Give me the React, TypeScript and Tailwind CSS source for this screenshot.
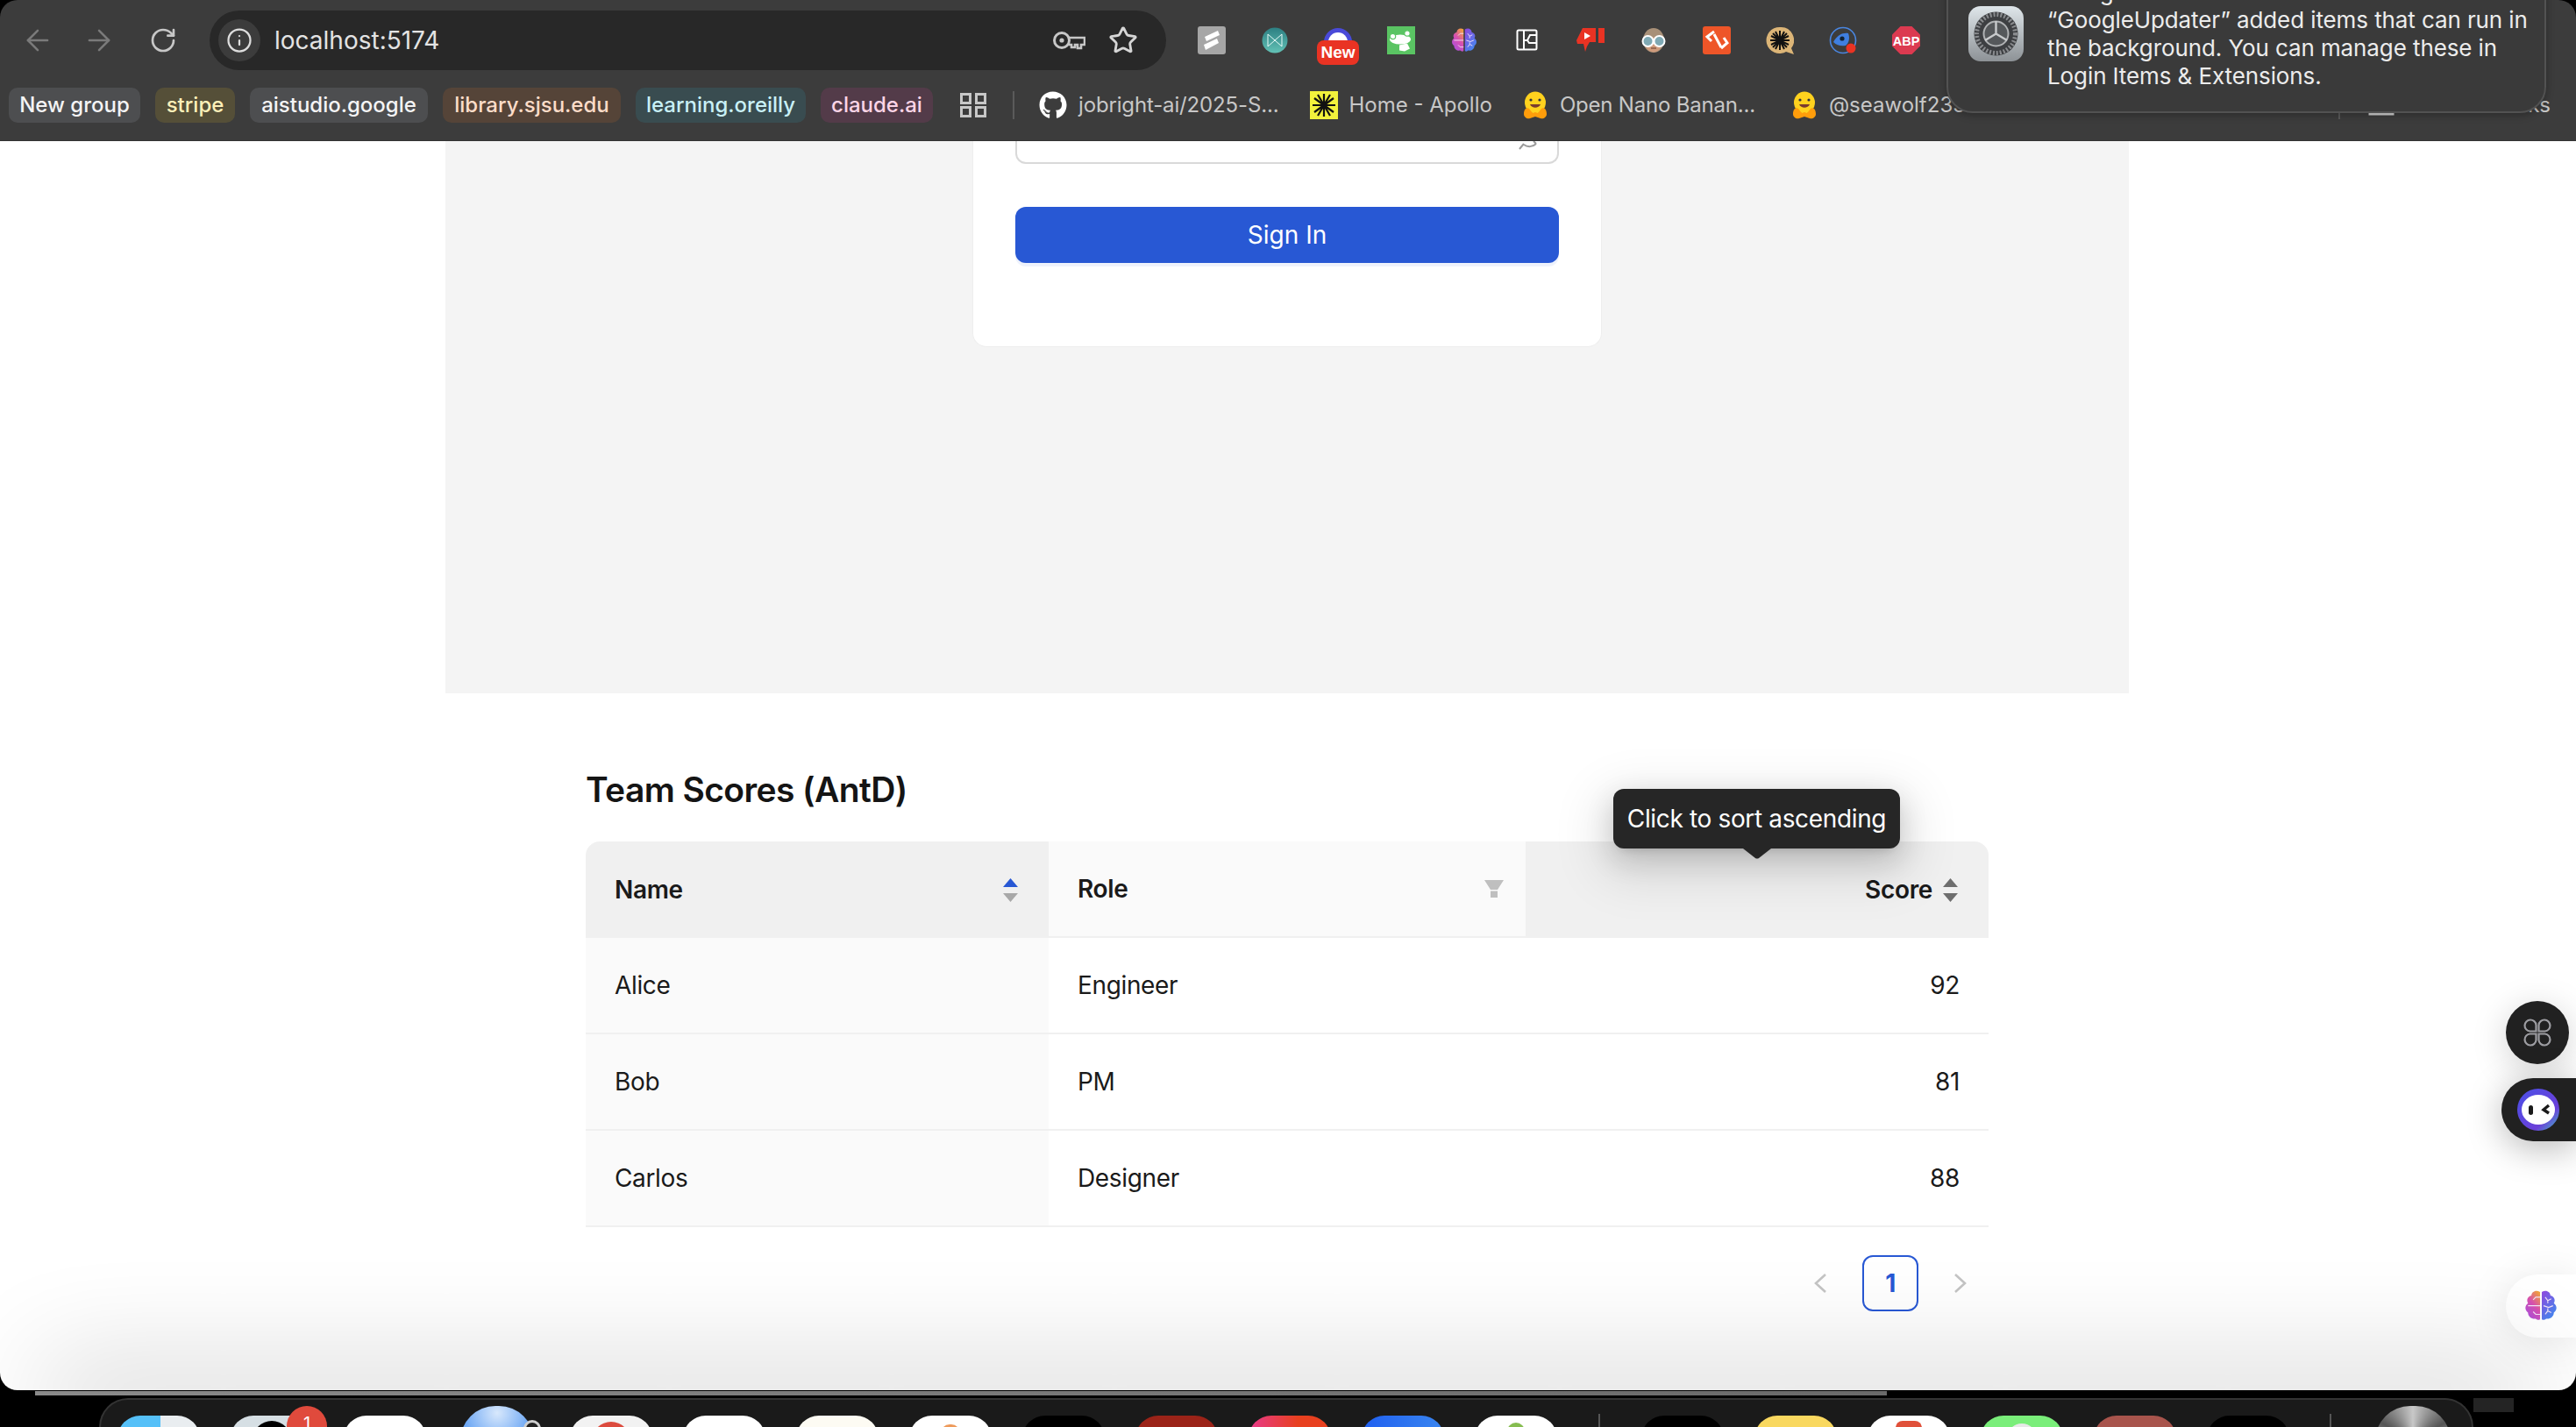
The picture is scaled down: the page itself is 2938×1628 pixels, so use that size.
import React from "react";
import { ArrowLeft, ArrowRight, RotateCw, Info, Star } from "lucide-react";
import { FaGithub } from "react-icons/fa";

const chips = [
  { t: "New group", c: "bg-[#4d4e50] text-[#f4f4f5]", w: "w-[150px]" },
  { t: "stripe", c: "bg-[#554f38] text-[#fdf0b8]", w: "w-[91px]" },
  { t: "aistudio.google", c: "bg-[#4d4e50] text-[#f4f4f5]", w: "w-[203px]" },
  { t: "library.sjsu.edu", c: "bg-[#554438] text-[#fcdcc8]", w: "w-[203px]" },
  { t: "learning.oreilly", c: "bg-[#394c50] text-[#c8f0f6]", w: "w-[194px]" },
  { t: "claude.ai", c: "bg-[#533b49] text-[#fcd4e6]", w: "w-[128px]" },
];

function Brain({ size = 30 }: { size?: number }) {
  return (
    <svg width={size} height={size * 0.93} viewBox="0 0 38 36" className="shrink-0">
      <defs>
        <linearGradient id="brainL" x1="0.8" y1="0" x2="0.2" y2="1">
          <stop offset="0" stopColor="#f0a040" />
          <stop offset="0.45" stopColor="#d850b0" />
          <stop offset="1" stopColor="#a850e0" />
        </linearGradient>
        <linearGradient id="brainR" x1="0.2" y1="0" x2="0.8" y2="1">
          <stop offset="0" stopColor="#8a4de0" />
          <stop offset="1" stopColor="#3f8cf0" />
        </linearGradient>
      </defs>
      <path d="M18 2c-5-3-10 0-10 4-5 1-6 6-4 9-4 3-4 8 0 11 0 5 5 8 9 7 2 2 5 2 5 0z" fill="url(#brainL)" />
      <path d="M20 2c5-3 10 0 10 4 5 1 6 6 4 9 4 3 4 8 0 11 0 5-5 8-9 7-2 2-5 2-5 0z" fill="url(#brainR)" />
      <path d="M18 18H4M18 8h-5l-3 3M18 28h-5l-3-3M24 8l3 4 4-2M27 12v3M24 28l3-4 4 2M27 24v-3M22 18l6 2 5-2" stroke="#f3e4f6" strokeWidth="1.2" fill="none" />
    </svg>
  );
}

function Hug() {
  return (
    <svg width="30" height="32" viewBox="0 0 30 32" className="shrink-0">
      <ellipse cx="15" cy="13" rx="12" ry="12.5" fill="#ffd21e" />
      <path d="M2 26c0-5 3-8 6-6l4 5 3-1 3 1 4-5c3-2 6 1 6 6 0 4-4 6-7 5l-6-2-6 2c-3 1-7-1-7-5z" fill="#ff9d0b" />
      <circle cx="10" cy="10" r="1.6" fill="#32343d" />
      <circle cx="20" cy="10" r="1.6" fill="#32343d" />
      <path d="M9 15c2 5 10 5 12 0z" fill="#7a3b2e" />
    </svg>
  );
}

function Sorter({ up, down }: { up: string; down: string }) {
  return (
    <svg width="17" height="27" viewBox="0 0 17 27" className="shrink-0">
      <polygon points="0,10 8.5,0 17,10" fill={up} />
      <polygon points="0,17 17,17 8.5,27" fill={down} />
    </svg>
  );
}

function Extensions() {
  return (
    <div className="ml-[36px] flex items-center gap-[40px] shrink-0">
      <svg width="32" height="32" viewBox="0 0 32 32"><rect width="32" height="32" rx="3" fill="#a6a6a6" /><path d="M8 12l15-7 2 5-15 7zM7 21l15-7 2 5-15 8z" fill="#fff" /></svg>
      <svg width="32" height="32" viewBox="0 0 32 32"><defs><linearGradient id="teal" x1="0" y1="0" x2="0" y2="1"><stop offset="0" stopColor="#2d7f82" /><stop offset="1" stopColor="#63c2b6" /></linearGradient></defs><circle cx="16" cy="16" r="14.5" fill="url(#teal)" /><path d="M8 9l8 7 8-7v14l-8-7-8 7z" fill="none" stroke="#e8fbf8" strokeWidth="1" /></svg>
      <div className="relative w-[32px] h-[32px]">
        <svg width="32" height="32" viewBox="0 0 32 32"><path d="M0 18a16 16 0 0 1 32 0z" fill="#4a4ad8" /><path d="M5 18a11 11 0 0 1 22 0z" fill="#fff" /></svg>
        <div className="absolute left-[-8px] top-[16px] w-[48px] h-[28px] rounded-[8px] bg-[#e93323] text-white font-bold text-[19px] leading-[28px] text-center font-['Liberation_Sans',sans-serif]">New</div>
      </div>
      <svg width="32" height="32" viewBox="0 0 32 32"><rect width="32" height="32" fill="#5ac463" /><ellipse cx="15" cy="15" rx="12" ry="5.5" fill="#fff" /><circle cx="6.5" cy="11.5" r="3.2" fill="#fff" stroke="#5ac463" strokeWidth="1.2" /><circle cx="23" cy="8" r="3.2" fill="#fff" stroke="#5ac463" strokeWidth="1.2" /><path d="M14 21.5l9-2 3 6-6 3-6-1z" fill="#fff" /></svg>
      <div className="w-[32px] flex justify-center"><Brain size={30} /></div>
      <svg width="32" height="32" viewBox="0 0 32 32"><rect x="4.5" y="4.5" width="22" height="22" rx="1.5" fill="none" stroke="#fff" strokeWidth="2" /><path d="M12 5v21M12 16h4l3-6h7M16 16l2 3h8" fill="none" stroke="#fff" strokeWidth="2" /></svg>
      <svg width="32" height="32" viewBox="0 0 32 32"><path d="M7 2h15v16h-7l-3 5-2 6-2-9H1l-1-4zM25 2h7v17h-7z" fill="#e93323" /><path d="M9 7l7 4-7 4z" fill="#fff" /></svg>
      <svg width="32" height="32" viewBox="0 0 32 32"><ellipse cx="16" cy="16" rx="12" ry="14" fill="#a89078" /><ellipse cx="16" cy="21" rx="9" ry="8.5" fill="#cf9b7c" /><circle cx="9.5" cy="17" r="6" fill="#7fa9b4" stroke="#fff" strokeWidth="2" /><circle cx="22.5" cy="17" r="6" fill="#7fa9b4" stroke="#fff" strokeWidth="2" /><path d="M13 25h6" stroke="#8a5a44" strokeWidth="1.5" /></svg>
      <svg width="32" height="32" viewBox="0 0 32 32"><rect width="32" height="32" rx="3" fill="#ee5528" /><path d="M13 6L5 12l5 5M13 9l8 15M24 13l4 6-7 6" fill="none" stroke="#fff" strokeWidth="3" /></svg>
      <svg width="32" height="32" viewBox="0 0 32 32"><path d="M16 1a15 15 0 1 0 7 28l9 3-3-7A15 15 0 0 0 16 1z" fill="#dcb577" /><path d="M16 5v22M5 16h22M8 8l16 16M24 8L8 24M11 6l10 20M21 6L11 26M6 11l20 10M26 11L6 21" stroke="#111" strokeWidth="2" /></svg>
      <svg width="32" height="32" viewBox="0 0 32 32"><circle cx="16" cy="16" r="14.5" fill="none" stroke="#4a86e0" strokeWidth="1.6" /><path d="M5 18c4-8 11-11 17-10 2 5 1 11-3 14-5 1-10 0-14-4z" fill="#3f7fe0" /><circle cx="15" cy="14" r="2.6" fill="#123" /><circle cx="25" cy="25" r="5.5" fill="#e93323" /></svg>
      <svg width="32" height="32" viewBox="0 0 32 32"><polygon points="9.5,0 22.5,0 32,9.5 32,22.5 22.5,32 9.5,32 0,22.5 0,9.5" fill="#dc3a50" /><text x="16" y="21.5" textAnchor="middle" fontSize="14.5" fontWeight="700" fontFamily="Liberation Sans" fill="#fff">ABP</text></svg>
    </div>
  );
}

function BrowserChrome() {
  return (
    <div className="h-[161px] shrink-0 bg-[#3c3c3c] border-b border-[#333333] flex flex-col text-[#c7c7c7] rounded-t-[20px]">
      <div className="flex items-center h-[68px] mt-[12px] shrink-0">
        <div className="w-[239px] shrink-0 flex items-center pl-[24px] gap-[32px]">
          <ArrowLeft size={38} strokeWidth={1.6} className="text-[#7a7a7a]" />
          <ArrowRight size={38} strokeWidth={1.6} className="text-[#7a7a7a]" />
          <RotateCw size={32} strokeWidth={2} className="ml-[6px] text-[#c7c7c7]" />
        </div>
        <div className="w-[1091px] h-[68px] rounded-full bg-[#282828] flex items-center pl-[10px] pr-[32px] shrink-0">
          <div className="w-[48px] h-[48px] rounded-full bg-[#3c3c3c] flex items-center justify-center"><Info size={30} strokeWidth={1.8} className="text-[#dedede]" /></div>
          <span className="ml-[16px] text-[28px] text-[#e3e3e3]">localhost:5174</span>
          <div className="ml-auto flex items-center gap-[26px]">
            <svg width="38" height="26" viewBox="0 0 38 26"><circle cx="11" cy="13" r="8.5" fill="none" stroke="#c7c7c7" strokeWidth="3" /><circle cx="11" cy="13" r="2.6" fill="#c7c7c7" /><path d="M19 10h18v8h-4v4h-4v-4h-3v3h-4v-3h-3" fill="none" stroke="#c7c7c7" strokeWidth="2.6" /></svg>
            <Star size={34} strokeWidth={2} className="text-[#d6d6d6]" />
          </div>
        </div>
        <Extensions />
      </div>
      <div className="flex items-center h-[40px] mt-[20px] pl-[10px] pr-[29px] text-[24px] whitespace-nowrap">
        <div className="flex gap-[17px] shrink-0">
          {chips.map((c) => (
            <div key={c.t} className={`h-[40px] rounded-[10px] flex items-center justify-center font-medium ${c.c} ${c.w}`}>{c.t}</div>
          ))}
        </div>
        <svg width="30" height="28" viewBox="0 0 30 28" className="ml-[31px] shrink-0"><g fill="none" stroke="#c7c7c7" strokeWidth="3"><rect x="1.5" y="1.5" width="10" height="10" /><rect x="18.5" y="1.5" width="10" height="10" /><rect x="1.5" y="16.5" width="10" height="10" /><rect x="18.5" y="16.5" width="10" height="10" /></g></svg>
        <div className="w-[2px] h-[32px] bg-[#5a5a5a] ml-[30px] shrink-0" />
        <FaGithub size={32} className="ml-[28px] text-white shrink-0" />
        <span className="ml-[13px] tracking-[-0.15px]">jobright-ai/2025-S...</span>
        <svg width="32" height="32" viewBox="0 0 32 32" className="ml-[36px] shrink-0"><rect width="32" height="32" fill="#f2f23c" /><path d="M16 3v26M5 8l22 16M27 8L5 24M3 16h26M9 4l14 24M23 4L9 28" stroke="#111" strokeWidth="2.2" /></svg>
        <span className="ml-[12px]">Home - Apollo</span>
        <div className="ml-[34px]"><Hug /></div>
        <span className="ml-[13px] tracking-[-0.2px]">Open Nano Banan...</span>
        <div className="ml-[41px]"><Hug /></div>
        <span className="ml-[13px]">@seawolf2339</span>
        <div className="ml-auto w-[2px] h-[32px] bg-[#5a5a5a] shrink-0" />
        <svg width="30" height="24" viewBox="0 0 30 24" className="ml-[32px] shrink-0"><path d="M2 2h10l3 3h13v17H2z" fill="none" stroke="#d4d4d4" strokeWidth="3" /></svg>
        <span className="ml-[16px]">All Bookmarks</span>
      </div>
    </div>
  );
}

function LoginPanel() {
  return (
    <div className="ml-[508px] w-[1920px] h-[630px] shrink-0 bg-[#f4f4f4] flex flex-col items-center">
      <div className="w-[718px] h-[235px] shrink-0 bg-white border-x border-b border-[#eeeeee] rounded-b-[16px] px-[48px] flex flex-col">
        <div className="h-[26px] shrink-0 border-x-2 border-b-2 border-[#d9d9d9] rounded-b-[12px] flex justify-end items-start pr-[20px] overflow-hidden">
          <svg width="26" height="10" viewBox="0 0 26 10"><path d="M3 9L8 3M8 4c4 3 10 3 14-1M19 0l3 3" fill="none" stroke="#9a9a9a" strokeWidth="2" /></svg>
        </div>
        <button className="mt-[49px] h-[64px] shrink-0 rounded-[12px] bg-[#2858d4] text-white text-[28px] shadow-[0_4px_0_rgba(40,88,212,0.08)]">Sign In</button>
      </div>
    </div>
  );
}

const rows = [
  ["Alice", "Engineer", "92"],
  ["Bob", "PM", "81"],
  ["Carlos", "Designer", "88"],
];

function Chevron({ d }: { d: string }) {
  return (
    <svg width="16" height="24" viewBox="0 0 16 24"><path d={d} fill="none" stroke="#c4c4c4" strokeWidth="2.6" /></svg>
  );
}

function ScoreTable() {
  return (
    <div className="ml-[668px] w-[1600px] shrink-0 text-[28px] tracking-[-0.35px] text-[#1a1a1a]">
      <h2 className="mt-[82px] h-[56px] leading-[56px] text-[39px] tracking-[-0.6px] font-semibold text-[#141414]">Team Scores (AntD)</h2>
      <div className="mt-[31px] rounded-t-[16px]">
        <div className="grid grid-cols-[528px_544px_528px] h-[110px] font-semibold">
          <div className="bg-[#f0f0f0] rounded-tl-[16px] flex items-center justify-between pl-[33px] pr-[35px]">
            <span>Name</span>
            <Sorter up="#2858d4" down="#a8a8a8" />
          </div>
          <div className="bg-[#fafafa] border-b-2 border-[#f0f0f0] flex items-center justify-between pl-[33px] pr-[25px]">
            <span>Role</span>
            <svg width="22" height="20" viewBox="0 0 22 20"><path d="M0 0h22l-7 11H7zM7 12.5h8V20H7z" fill="#bfbfbf" /></svg>
          </div>
          <div className="relative bg-[#f0f0f0] rounded-tr-[16px] flex items-center justify-end gap-[12px] pr-[35px]">
            <span>Score</span>
            <Sorter up="#6e6e6e" down="#6e6e6e" />
            <div className="absolute left-[100px] top-[-60px] w-[327px] h-[68px] rounded-[12px] bg-[#262626] text-white font-normal flex items-center justify-center shadow-[0_12px_32px_0_rgba(0,0,0,0.16),0_6px_12px_-8px_rgba(0,0,0,0.24),0_18px_56px_16px_rgba(0,0,0,0.1)]">
              Click to sort ascending
              <svg width="32" height="12" viewBox="0 0 32 12" className="absolute left-[148px] top-full"><path d="M0 0h32L18 11q-2 1-4 0z" fill="#262626" /></svg>
            </div>
          </div>
        </div>
        {rows.map((r) => (
          <div key={r[0]} className="grid grid-cols-[528px_544px_528px] h-[110px] border-b-2 border-[#f0f0f0]">
            <div className="bg-[#fafafa] flex items-center pl-[33px]">{r[0]}</div>
            <div className="flex items-center pl-[33px]">{r[1]}</div>
            <div className="flex items-center justify-end pr-[33px]">{r[2]}</div>
          </div>
        ))}
      </div>
      <div className="mt-[32px] flex justify-end gap-[16px] items-center">
        <div className="w-[64px] h-[64px] flex items-center justify-center"><Chevron d="M14 2L3 12l11 10" /></div>
        <div className="w-[64px] h-[64px] rounded-[12px] border-2 border-[#2858d4] text-[#2858d4] font-bold flex items-center justify-center">1</div>
        <div className="w-[64px] h-[64px] flex items-center justify-center"><Chevron d="M2 2l11 10L2 22" /></div>
      </div>
    </div>
  );
}

function FloatingWidgets() {
  return (
    <>
      <div className="absolute left-[2858px] top-[981px] w-[72px] h-[72px] rounded-full bg-[#212121] flex items-center justify-center shadow-[0_8px_40px_rgba(0,0,0,0.18)]">
        <svg width="32" height="32" viewBox="0 0 32 32" fill="none" stroke="#9d9da2" strokeWidth="2.2">
          <path d="M14.5 14.5H7.5a6.5 6.5 0 1 1 7-7z" />
          <path d="M17.5 14.5h7a6.5 6.5 0 1 0-7-7z" />
          <path d="M14.5 17.5H7.5a6.5 6.5 0 1 0 7 7z" />
          <path d="M17.5 17.5h7a6.5 6.5 0 1 1-7 7z" />
        </svg>
      </div>
      <div className="absolute left-[2853px] right-0 top-[1069px] h-[72px] rounded-l-full bg-[#212121] flex items-center pl-[18px] shadow-[0_8px_40px_rgba(0,0,0,0.28)]">
        <svg width="48" height="48" viewBox="0 0 48 48">
          <defs><linearGradient id="ring" x1="0" y1="0" x2="1" y2="1"><stop offset="0" stopColor="#4a50e8" /><stop offset="0.7" stopColor="#6a40d8" /><stop offset="1" stopColor="#40c0c8" /></linearGradient></defs>
          <circle cx="24" cy="24" r="24" fill="url(#ring)" />
          <ellipse cx="24" cy="24" rx="19" ry="17" fill="#fff" />
          <rect x="13" y="19" width="5" height="11" rx="2.5" fill="#1a1a1a" />
          <path d="M36 19l-6 5 6 4" fill="none" stroke="#1a1a1a" strokeWidth="3.4" />
        </svg>
      </div>
      <div className="absolute left-[2858px] right-0 top-[1293px] h-[72px] rounded-l-full bg-white flex items-center pl-[21px] shadow-[0_4px_48px_rgba(0,0,0,0.1)]">
        <Brain size={38} />
      </div>
    </>
  );
}

type Tile = { c: string; inner?: React.ReactNode };
const tilesA: Tile[] = [
  { c: "bg-[linear-gradient(90deg,#55c0f8_52%,#e9edf0_52%)]" },
  { c: "bg-[#d6dfe4] relative flex justify-center", inner: <><div className="w-[44px] h-[44px] rounded-full bg-black mt-[6px]" /><div className="absolute left-[64px] top-[-11px] w-[46px] h-[46px] rounded-full bg-[#e04a3c] text-white text-[20px] text-center leading-[34px] pt-[3px]">1</div></> },
  { c: "bg-white" },
  { c: "relative bg-[radial-gradient(circle_at_50%_10%,#d8e8fc,#6ea8f4_45%,#3f78d8)] ml-[4px] mr-[6px] !rounded-full mt-[-11px] !h-[80px] !w-[84px]", inner: <div className="absolute left-[72px] top-[16px] w-[20px] h-[24px] rounded-full border-[3px] border-[#cfcfcf] bg-[#222222]" /> },
  { c: "bg-[#f2f2f2] flex justify-center", inner: <div className="w-[44px] h-[26px] rounded-t-full bg-[#dc4b3e] mt-[7px]" /> },
  { c: "bg-white" },
  { c: "bg-[#fdfbf3]" },
  { c: "bg-white flex justify-center", inner: <div className="w-[22px] h-[10px] rounded-t-full bg-[#ee9a5a] mt-[10px]" /> },
  { c: "bg-black" },
  { c: "bg-[#9b2318]" },
  { c: "bg-[linear-gradient(90deg,#e83a8c,#e8401f_60%)]" },
  { c: "bg-[linear-gradient(90deg,#1f5ff0,#3a86f0)]" },
  { c: "bg-white flex justify-center", inner: <div className="w-[20px] h-[12px] rounded-t-full bg-[#86bd50] mt-[8px]" /> },
];
const tilesB: Tile[] = [
  { c: "bg-black" },
  { c: "bg-[#f9d85f]" },
  { c: "bg-white flex justify-center", inner: <div className="w-[30px] h-[18px] rounded-t-[8px] bg-[#e0503a] mt-[6px]" /> },
  { c: "bg-[#7aee7a] flex justify-center", inner: <div className="w-[34px] h-[34px] rounded-full bg-[#e8e8e8] mt-[9px]" /> },
  { c: "bg-[#a8544c]" },
  { c: "bg-black" },
];

function Dock() {
  return (
    <div className="mt-[3px] flex items-start h-[33px] shrink-0">
      <div className="ml-[113px] w-[2708px] h-[33px] shrink-0 rounded-t-[44px] bg-[#1a1a1a] border-t-2 border-x-2 border-[#333333] flex items-start pl-[19px] pt-[18px]">
        <div className="flex gap-[35px] shrink-0">
          {tilesA.map((t, i) => (
            <div key={i} className={`w-[94px] h-[30px] rounded-t-[26px] ${t.c}`}>{t.inner}</div>
          ))}
        </div>
        <div className="w-[2px] h-[20px] bg-[#555555] ml-[47px] mt-[-2px] shrink-0" />
        <div className="flex gap-[35px] ml-[47px] shrink-0">
          {tilesB.map((t, i) => (
            <div key={i} className={`w-[94px] h-[30px] rounded-t-[26px] ${t.c}`}>{t.inner}</div>
          ))}
        </div>
        <div className="w-[2px] h-[20px] bg-[#555555] ml-[46px] mt-[-2px] shrink-0" />
        <div className="ml-[50px] w-[86px] h-[80px] mt-[-11px] rounded-full bg-[conic-gradient(#c8c8c8,#555,#e8e8e8,#3a6ea8,#d8d8d8,#555,#c8c8c8)] shrink-0" />
      </div>
      <div className="w-[46px] h-[16px] bg-[#242424] shrink-0" />
    </div>
  );
}

export default function App() {
  return (
    <div className="relative w-[2938px] h-[1628px] overflow-hidden bg-black font-['Inter',sans-serif] antialiased flex flex-col">
      <BrowserChrome />
      <div className="relative h-[1425px] shrink-0 bg-white rounded-b-[20px] overflow-hidden flex flex-col">
        <LoginPanel />
        <ScoreTable />
        <FloatingWidgets />
        <div className="absolute left-[80px] right-[80px] top-full h-[10px] shadow-[0_0_120px_34px_rgba(0,0,0,0.16)]" />
      </div>
      <div className="mt-[1px] ml-[40px] w-[2112px] h-[5px] shrink-0 bg-[linear-gradient(90deg,#8a8a8a,#6a6a6a)]" />
      <Dock />
      <div className="absolute left-[2220px] top-[-40px] w-[684px] h-[169px] rounded-b-[30px] bg-[#3a3a3a] border-2 border-[#525252] shadow-[0_2px_10px_rgba(0,0,0,0.3)] flex items-start pl-[22px] pt-[45px] text-[#ececec]">
        <svg width="66" height="64" viewBox="0 0 66 64" className="shrink-0">
          <defs><linearGradient id="set" x1="0" y1="0" x2="0" y2="1"><stop offset="0" stopColor="#dfe6ea" /><stop offset="1" stopColor="#8d9296" /></linearGradient></defs>
          <rect x="1" width="63" height="63" rx="14" fill="url(#set)" />
          <circle cx="32.5" cy="31.5" r="25" fill="#3d3f42" />
          <circle cx="32.5" cy="31.5" r="22" fill="none" stroke="#8a8c8f" strokeWidth="5" strokeDasharray="2 2" />
          <circle cx="32.5" cy="31.5" r="14" fill="#55585b" stroke="#b0b2b4" strokeWidth="2" />
          <path d="M32.5 31.5V17M32.5 31.5L20 39M32.5 31.5L45 39" stroke="#c8cacc" strokeWidth="2.4" />
        </svg>
        <div className="ml-[25px] mt-[-32px] text-[26px] leading-[32px] tracking-[-0.1px] whitespace-nowrap">
          <div>Background Items Added</div>
          <div>“GoogleUpdater” added items that can run in</div>
          <div>the background. You can manage these in</div>
          <div>Login Items &amp; Extensions.</div>
        </div>
      </div>
    </div>
  );
}
